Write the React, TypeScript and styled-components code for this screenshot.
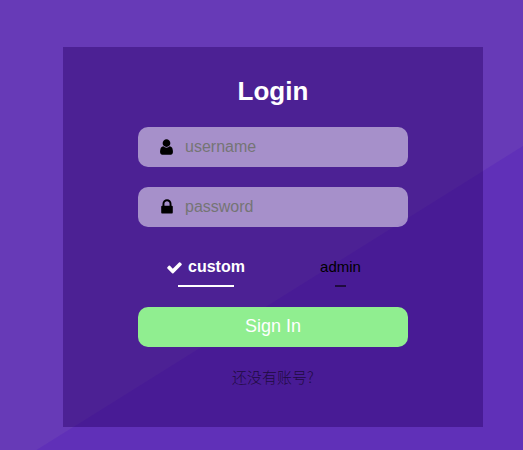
import React, { useState } from "react";
import styled, { createGlobalStyle } from "styled-components";

const GlobalStyle = createGlobalStyle`
  *, *::before, *::after { box-sizing: border-box; }
  body {
    margin: 0;
    font-family: "Liberation Sans", Arial, "Noto Sans CJK SC", sans-serif;
    font-size: 16px;
    color: #000;
  }
`;

const Page = styled.main`
  display: flex;
  align-items: flex-start;
  min-height: 100vh;
  padding: 47px 40px 23px 63px;
  background: linear-gradient(148deg, #673ab7 calc(50% + 71px), #6030b8 calc(50% + 72px));
`;

const Card = styled.section`
  flex: 1;
  display: flex;
  flex-direction: column;
  align-items: center;
  padding: 28px 24px 40px;
  background: rgba(40, 0, 100, 0.42);
`;

const Title = styled.h1`
  margin: 0 0 20px;
  font-size: 26px;
  line-height: 32px;
  color: #fff;
`;

const Form = styled.form`
  display: flex;
  flex-direction: column;
  gap: 20px;
  width: 100%;
  max-width: 270px;
`;

const Field = styled.label`
  display: flex;
  align-items: center;
  height: 40px;
  padding: 0 20px;
  border-radius: 10px;
  background: rgba(255, 255, 255, 0.5);
`;

const IconSlot = styled.span`
  display: flex;
  justify-content: center;
  width: 17px;
  margin-right: 10px;
`;

const TextInput = styled.input`
  flex: 1;
  min-width: 0;
  padding: 0;
  border: 0;
  outline: 0;
  background: transparent;
  font: inherit;
  color: #000;
  &::placeholder { color: #757575; }
`;

const Roles = styled.fieldset`
  display: grid;
  grid-template-columns: 1fr 1fr;
  min-width: 0;
  height: 30px;
  margin: 10px 0 0;
  padding: 0;
  border: 0;
`;

const Role = styled.label<{ $active: boolean }>`
  display: flex;
  flex-direction: column;
  align-items: center;
  gap: 8px;
  cursor: pointer;
  font-size: ${(p) => (p.$active ? "16px" : "15px")};
  font-weight: ${(p) => (p.$active ? "bold" : "normal")};
  color: ${(p) => (p.$active ? "#fff" : "#000")};

  &::after {
    content: "";
    flex: none;
    width: ${(p) => (p.$active ? "56px" : "11px")};
    height: 2px;
    background: ${(p) => (p.$active ? "#fff" : "#1f0b40")};
  }
`;

const RoleText = styled.span`
  display: flex;
  align-items: center;
  gap: 5px;
  line-height: 20px;
`;

const HiddenRadio = styled.input`
  position: absolute;
  opacity: 0;
  pointer-events: none;
`;

const SignIn = styled.button`
  height: 40px;
  padding: 0 0 2px;
  border: 0;
  border-radius: 10px;
  background: #90ee90;
  font: inherit;
  font-size: 18px;
  color: #fff;
  cursor: pointer;
`;

const Register = styled.a`
  margin: 20px 0 0;
  font-family: "Noto Sans CJK SC", sans-serif;
  font-size: 15px;
  line-height: 20px;
  font-weight: 300;
  color: #1f0b40;
  text-decoration: none;
`;

const UserIcon = () => (
  <svg width="13" height="18" viewBox="0 0 1280 1792" fill="currentColor" aria-hidden="true">
    <path d="M1280 1399q0 109-62.500 187t-150.500 78h-854q-88 0-150.500-78t-62.500-187q0-85 8.500-160.500t31.500-152 58.500-131 94-89 134.500-34.500q131 128 313 128t313-128q76 0 134.500 34.500t94 89 58.500 131 31.500 152 8.500 160.500zM1024 512q0 159-112.500 271.500t-271.500 112.500-271.500-112.500-112.500-271.500 112.500-271.500 271.500-112.500 271.500 112.500 112.500 271.500z" />
  </svg>
);

const LockIcon = () => (
  <svg width="12" height="18" viewBox="0 0 1152 1792" fill="currentColor" aria-hidden="true">
    <path d="M320 768h512v-192q0-106-75-181t-181-75-181 75-75 181v192zm832 96v576q0 40-28 68t-68 28h-960q-40 0-68-28t-28-68v-576q0-40 28-68t68-28h32v-192q0-184 132-316t316-132 316 132 132 316v192h32q40 0 68 28t28 68z" />
  </svg>
);

const CheckIcon = () => (
  <svg width="17" height="17" viewBox="0 0 1792 1792" fill="currentColor" aria-hidden="true">
    <path d="M1671 566q0 40-28 68l-724 724-136 136q-28 28-68 28t-68-28l-136-136-362-362q-28-28-28-68t28-68l136-136q28-28 68-28t68 28l294 295 656-657q28-28 68-28t68 28l136 136q28 28 28 68z" />
  </svg>
);

const roles = ["custom", "admin"];

export default function App() {
  const [role, setRole] = useState("custom");

  return (
    <>
      <GlobalStyle />
      <Page>
        <Card>
          <Title>Login</Title>
          <Form onSubmit={(e) => e.preventDefault()}>
            <Field>
              <IconSlot><UserIcon /></IconSlot>
              <TextInput type="text" placeholder="username" aria-label="username" />
            </Field>
            <Field>
              <IconSlot><LockIcon /></IconSlot>
              <TextInput type="password" placeholder="password" aria-label="password" />
            </Field>
            <Roles aria-label="role">
              {roles.map((name) => (
                <Role key={name} $active={role === name}>
                  <HiddenRadio
                    type="radio"
                    name="role"
                    value={name}
                    checked={role === name}
                    onChange={() => setRole(name)}
                  />
                  <RoleText>
                    {role === name && <CheckIcon />}
                    {name}
                  </RoleText>
                </Role>
              ))}
            </Roles>
            <SignIn type="submit">Sign In</SignIn>
          </Form>
          <Register href="#register">还没有账号?</Register>
        </Card>
      </Page>
    </>
  );
}
